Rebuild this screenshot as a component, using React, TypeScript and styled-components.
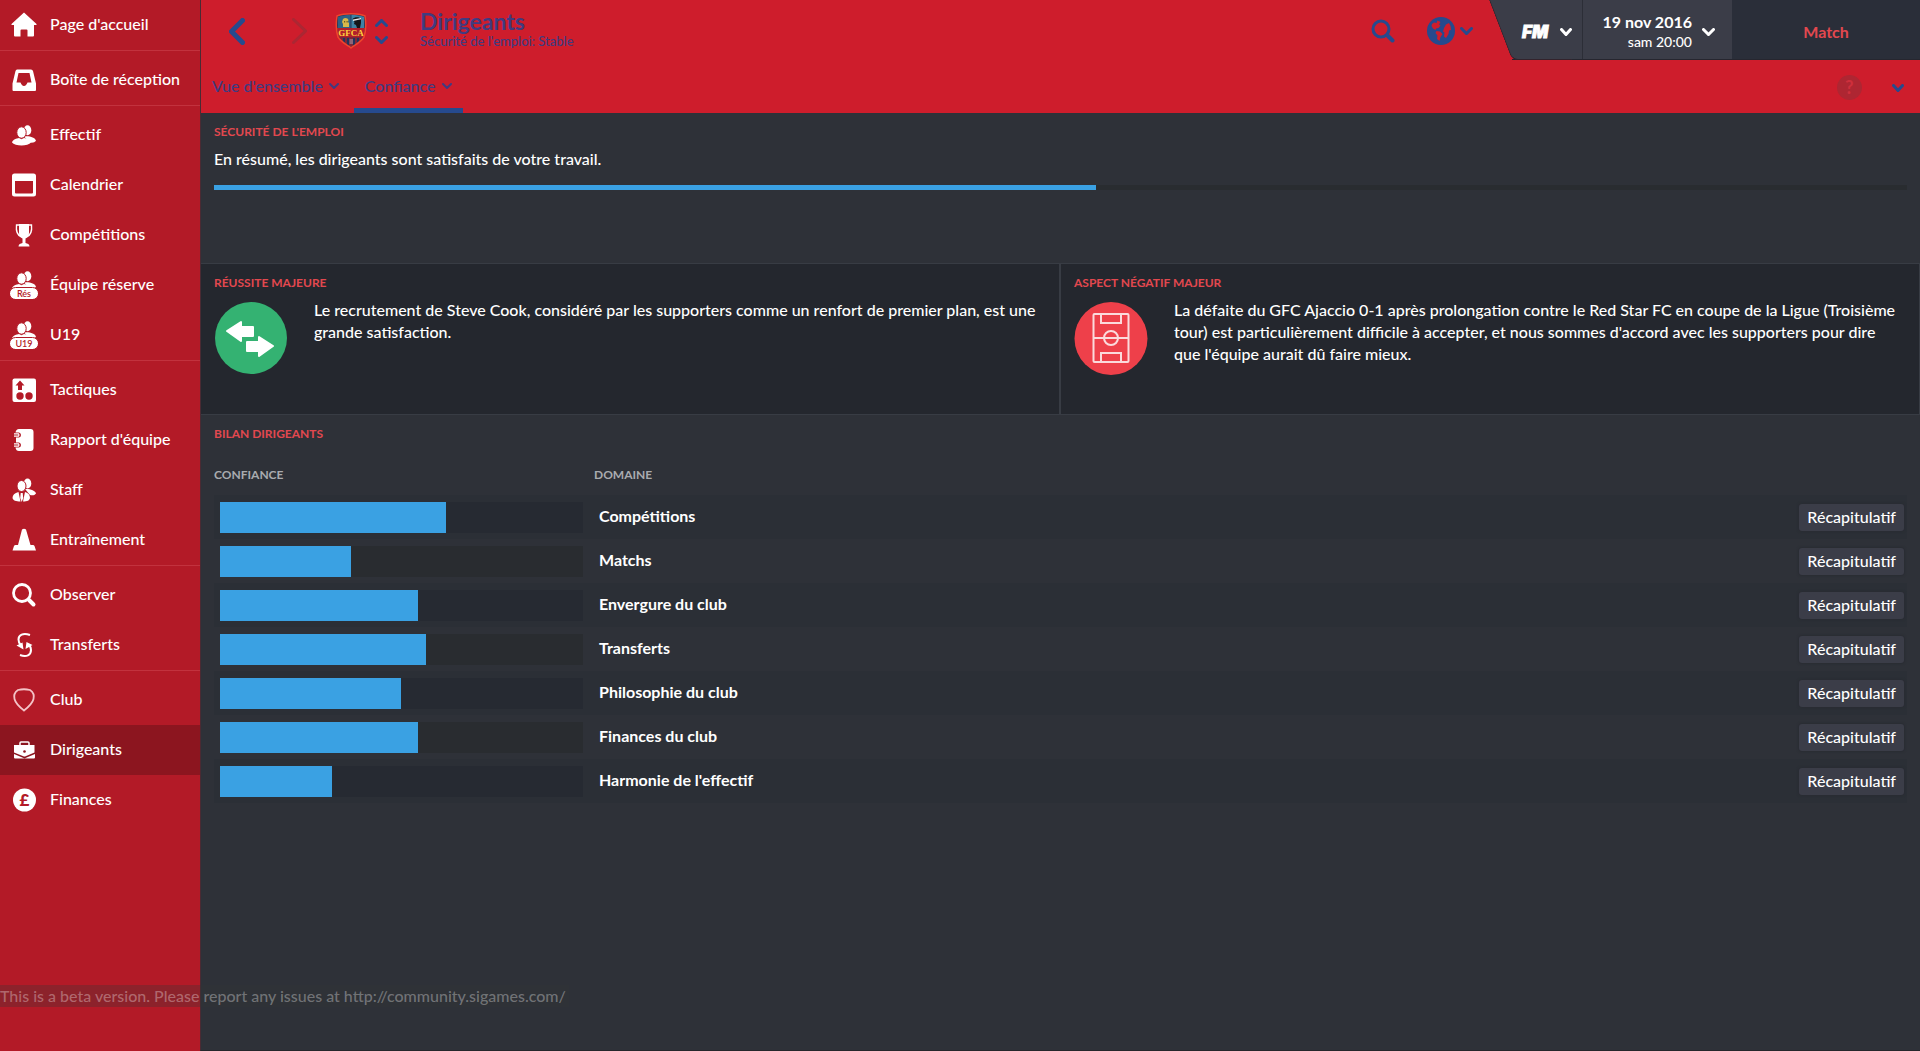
import React from 'react';
import styled, { createGlobalStyle, css } from 'styled-components';

const color = {
  header: '#ce1d2c',
  sidebar: '#b31a27',
  sidebarActive: '#8c151f',
  sidebarLine: '#c2323e',
  body: '#2e3138',
  panel: '#24272e',
  line: '#383c44',
  accent: '#e2484f',
  club: '#264a8e',
  clubText: '#403b80',
  bar: '#3aa1e3',
  control: '#3b3d48',
};

const GlobalStyle = createGlobalStyle`
  *, *::before, *::after { box-sizing: border-box; }
  body {
    margin: 0;
    background: ${color.body};
    color: #fff;
    font: 500 16px/22px Lato, "Open Sans", sans-serif;
  }
  button { font: inherit; color: inherit; background: none; border: 0; padding: 0; cursor: pointer; }
  a { color: inherit; text-decoration: none; }
  ul { list-style: none; margin: 0; padding: 0; }
  h1, h2, p { margin: 0; }
  svg { display: block; flex: none; }
`;

const Page = styled.div`
  position: relative;
  display: grid;
  grid-template-columns: 200px minmax(0, 1fr);
  min-height: 100vh;
`;

/* ---------- Sidebar ---------- */

const Sidebar = styled.nav`
  background: ${color.sidebar};
`;

const NavGroup = styled.ul`
  & + & {
    border-top: 1px solid ${color.sidebarLine};
    padding-top: 4px;
  }
`;

const NavLink = styled.a<{ $active?: boolean }>`
  display: flex;
  align-items: center;
  gap: 12px;
  height: 50px;
  padding-left: 10px;
  white-space: nowrap;
  background: ${(p) => (p.$active ? color.sidebarActive : 'transparent')};
`;

const NavLabel = styled.span`
  padding-bottom: 2px;
`;

/* ---------- Header ---------- */

const Main = styled.div`
  display: flex;
  flex-direction: column;
  border-left: 1px solid #4a2a33;
  border-bottom: 1px solid #25272b;
`;

const Header = styled.header`
  background: ${color.header};
  color: ${color.club};
`;

const TopRow = styled.div`
  display: flex;
  height: 60px;
`;

const TopTools = styled.div`
  display: flex;
  flex: 1;
  align-items: center;
  padding: 2px 7px 0 4px;
`;

const HistoryButton = styled.button`
  display: flex;
  justify-content: center;
  width: 63px;
`;

const ClubSwitcher = styled.div`
  display: flex;
  align-items: center;
  gap: 8px;
  margin: 0 32px 0 4px;
`;

const SwitchButtons = styled.div`
  display: flex;
  flex-direction: column;
  gap: 9px;
`;

const TitleBlock = styled.div`
  flex: 1;
  padding-bottom: 4px;
  color: ${color.clubText};
`;

const Title = styled.h1`
  font-size: 23px;
  font-weight: 700;
  line-height: 24px;
`;

const Subtitle = styled.p`
  font-size: 13px;
  line-height: 16px;
`;

const ToolButton = styled.button`
  display: flex;
  align-items: center;
  gap: 5px;
  margin-right: 32px;
`;

const Clock = styled.div`
  position: relative;
  display: flex;
  color: #fff;
  border-bottom: 1px solid #26262f;

  &::before {
    content: '';
    position: absolute;
    z-index: 0;
    inset: 0 auto -1px 0;
    width: 60px;
    background: ${color.control};
    border: solid #33232c;
    border-width: 0 0 1px 1px;
    border-radius: 0 0 0 6px;
    transform: skewX(21deg);
    transform-origin: bottom;
  }
`;

const ClockCell = styled.button<{ $kind: 'menu' | 'date' | 'match' }>`
  position: relative;
  display: flex;
  align-items: center;
  justify-content: center;
  padding-top: 4px;

  ${(p) =>
    p.$kind === 'menu' &&
    css`
      width: 70px;
      gap: 6px;
      padding-right: 10px;
      justify-content: flex-end;
      background: linear-gradient(90deg, transparent 20px, ${color.control} 20px);
    `}
  ${(p) =>
    p.$kind === 'date' &&
    css`
      width: 150px;
      gap: 10px;
      padding-right: 17px;
      justify-content: flex-end;
      background: ${color.control};
      border-left: 1px solid #2c2e37;
    `}
  ${(p) =>
    p.$kind === 'match' &&
    css`
      width: 188px;
      background: #2a2e39;
      color: ${color.accent};
      font-weight: 700;
    `}
`;

const DateText = styled.span`
  display: flex;
  flex-direction: column;
  text-align: right;
  font-size: 14px;
  line-height: 20px;

  strong { font-size: 16px; font-weight: 700; }
`;

const TabRow = styled.div`
  display: flex;
  align-items: stretch;
  gap: 4px;
  height: 53px;
  padding-right: 16px;
  color: ${color.clubText};
`;

const Tab = styled.button<{ $active?: boolean }>`
  display: flex;
  align-items: center;
  gap: 6px;
  padding: 4px 11px 0;
  white-space: nowrap;
  border-bottom: 5px solid ${(p) => (p.$active ? color.club : 'transparent')};
`;

const TabTools = styled.div`
  display: flex;
  align-items: center;
  gap: 30px;
  margin-left: auto;
  padding-top: 2px;
`;

const HelpButton = styled.button`
  width: 25px;
  height: 25px;
  border-radius: 50%;
  background: #ae2632;
  color: #ce2f3c;
  font-size: 18px;
  font-weight: 700;
  line-height: 25px;
`;

/* ---------- Content ---------- */

const Section = styled.section<{ $minHeight?: number }>`
  min-height: ${(p) => p.$minHeight ?? 0}px;
  padding: 10px 13px;
`;

const Label = styled.h2`
  color: ${color.accent};
  font-size: 12px;
  font-weight: 700;
  line-height: 18px;
  text-transform: uppercase;
`;

const Summary = styled.p`
  margin: 7px 0 15px;
`;

const Meter = styled.div<{ $size: 'thin' | 'thick' }>`
  height: ${(p) => (p.$size === 'thin' ? 5 : 31)}px;
  background: #292c30;
`;

const MeterFill = styled.div`
  height: 100%;
  background: ${color.bar};
`;

const Highlights = styled.div`
  display: grid;
  grid-template-columns: repeat(2, minmax(0, 1fr));
  gap: 2px;
  background: ${color.line};
  border: solid ${color.line};
  border-width: 1px 1px 1px 0;
`;

const Highlight = styled(Section)`
  padding-right: 18px;
  background: ${color.panel};
`;

const HighlightBody = styled.div`
  display: flex;
  align-items: flex-start;
  gap: 26px;
  margin-top: 7px;
`;

const Table = styled.table`
  width: 100%;
  margin-top: 12px;
  border-collapse: collapse;
  table-layout: fixed;
`;

const HeadCell = styled.th`
  height: 40px;
  padding: 0;
  color: #a9abaf;
  font-size: 12px;
  font-weight: 700;
  text-align: left;
  text-transform: uppercase;

  &:first-child { width: 380px; }
  &:last-child { width: 130px; }
`;

const BodyRow = styled.tr`
  &:nth-child(odd) {
    background: #2b2f36;
    ${Meter} { background: #262a32; }
  }
`;

const BarCell = styled.td`
  height: 44px;
  padding: 0 11px 0 6px;
`;

const NameCell = styled.th`
  padding: 0 5px 2px;
  font-weight: 700;
  text-align: left;
`;

const ActionCell = styled.td`
  padding: 0 3px 0 0;
  text-align: right;
`;

const RecapButton = styled.button`
  height: 27px;
  padding: 0 8px;
  border-radius: 3px;
  background: ${color.control};
  box-shadow: 0 0 2px 1px #292c33;
  vertical-align: middle;
`;

const BetaNotice = styled.p`
  position: absolute;
  left: 0;
  bottom: 44px;
  padding-right: 3px;
  background: rgba(50, 52, 54, 0.3);
  color: rgba(255, 255, 255, 0.32);
  pointer-events: none;
`;

/* ---------- Icons ---------- */

const NavIcon = ({ children }: { children: React.ReactNode }) => (
  <svg width="28" height="28" viewBox="0 0 28 28" fill="#fff" aria-hidden="true">
    {children}
  </svg>
);

const People = ({ dy = 0 }: { dy?: number }) => (
  <g transform={`translate(0 ${dy})`}>
    <ellipse cx="17.5" cy="7.2" rx="3.8" ry="5" />
    <path d="M14 13.5c5-.8 11 .7 12 4.3-1.300 2-4.500 2.300-6.500 1.500z" />
    <ellipse cx="11.500" cy="9.500" rx="4.700" ry="5.700" stroke={color.sidebar} />
    <path d="M2 19.500c1-3.500 4.500-4 7-4.500l2.500 1.300L14 15c3 .6 6.500 1.500 7 4.500-3 4-16 4-19 0z" />
  </g>
);

const Team = ({ tag }: { tag: string }) => (
  <NavIcon>
    <People dy={-2} />
    <rect x="-.5" y="16.500" width="29" height="12" rx="6" stroke={color.sidebar} />
    <text x="14" y="26" textAnchor="middle" fontSize="9" fontWeight="600" fill={color.sidebar}>
      {tag}
    </text>
  </NavIcon>
);

const Chevron = ({
  dir = 'down',
  w = 12,
  h = 8,
  stroke = 3,
  tone = 'currentColor',
}: {
  dir?: 'down' | 'up' | 'left' | 'right';
  w?: number;
  h?: number;
  stroke?: number;
  tone?: string;
}) => {
  const m = stroke / 2;
  const d = {
    down: `M${m} ${m}L${w / 2} ${h - m}L${w - m} ${m}`,
    up: `M${m} ${h - m}L${w / 2} ${m}L${w - m} ${h - m}`,
    left: `M${w - m} ${m}L${m} ${h / 2}L${w - m} ${h - m}`,
    right: `M${m} ${m}L${w - m} ${h / 2}L${m} ${h - m}`,
  }[dir];
  return (
    <svg width={w} height={h} fill="none" stroke={tone} strokeWidth={stroke} strokeLinecap="round" aria-hidden="true">
      <path d={d} />
    </svg>
  );
};

const Crest = () => (
  <svg width="32" height="36" viewBox="0 0 32 36" aria-label="GFCA" role="img">
    <path d="M2 3C9 0 23 0 30 3c1 7 1 15-1 21-3 5-9 8-13 11C12 32 6 29 3 24 1 18 1 10 2 3z" fill="#243a5e" />
    <path d="M3 4c4-1.500 8-2 12.500-2v13H3z" fill="#2d6285" />
    <path d="M16.500 2C21 2 25 2.500 29 4v11H16.500z" fill="#3d82a4" />
    <path d="M8 6c2-2 5-1 5.500 1L13 9l1 1v4H8v-3L7 9z" fill="#d8b84a" />
    <path d="M9 8h1.200v1.500H9zM11.500 8h1.200v1.500h-1.200z" fill="#6b5a22" />
    <path d="M17.500 6c2-2.500 7-2.500 8.500 0v4l-1 5h-3l-1-3-2-1 .5-2z" fill="#141519" />
    <path d="M18 6.500l8-1.500v1.300L18 8z" fill="#e9ecef" />
    <path d="M3 24h26c-3 5-9 8-13 11C12 32 6 29 3 24z" fill="#7d2638" />
    <path d="M9 25v5M13 25v8M19 25v8M23 25v5" stroke="#22345c" strokeWidth="2" />
    <path d="M14.500 26h3.500v5h-3.500z" fill="#9fa4b5" opacity=".5" />
    <path d="M2 15h28l-.8 9H2.800z" fill="#b01f2b" />
    <text x="16" y="22.500" textAnchor="middle" fontFamily="Liberation Serif, serif" fontSize="9" fontWeight="700" fill="#ffd23c">
      GFCA
    </text>
    <path d="M2 3C9 0 23 0 30 3c1 7 1 15-1 21-3 5-9 8-13 11C12 32 6 29 3 24 1 18 1 10 2 3z" fill="none" stroke="#f0442c" strokeWidth="1.500" />
  </svg>
);

const Globe = () => (
  <svg width="28" height="28" viewBox="0 0 28 28" aria-hidden="true">
    <circle cx="14" cy="14" r="14" fill={color.club} />
    <g fill={color.header}>
      <path d="M5 7l2-1.500 2.500.5 1-2.500 3 1.500L12 7.500l1.500 1-2 2.500-2.500.5L8.500 13 6 11.500 4.500 9z" />
      <path d="M9.500 14l3.500.5 2.500 2.500-2 3-1 4-2.500-2 .5-3.500L8.500 16z" />
      <path d="M17 11l2-3.500 3-1.500 1.500 3 .5 4-2 .5-.5 3.500-2.500 4-2-1.500.5-4-1.500-1z" />
    </g>
  </svg>
);

const Search = () => (
  <svg width="24" height="24" viewBox="0 0 24 24" fill="none" stroke="currentColor" strokeLinecap="round" aria-hidden="true">
    <circle cx="10" cy="10" r="8" strokeWidth="3" />
    <path d="M16.500 16.500l5 5" strokeWidth="4" />
  </svg>
);

const FmLogo = () => (
  <svg width="34" height="18" viewBox="0 0 34 18" role="img" aria-label="FM">
    <text x="2" y="15" fontFamily="Inter, sans-serif" fontSize="17" fontWeight="900" fontStyle="italic" fill="#fff" stroke="#fff" strokeWidth=".8">
      FM
    </text>
  </svg>
);

const SigningBadge = () => (
  <svg width="74" height="76" viewBox="0 0 74 76" aria-hidden="true">
    <circle cx="37" cy="39" r="36" fill="#34b272" />
    <g fill="#fff" stroke="#fff" strokeWidth="2" strokeLinejoin="round">
      <path d="M13 32l14-9v5h12v9H27v5z" />
      <path d="M59 47l-14-9v5H33v9h12v5z" />
    </g>
  </svg>
);

const PitchBadge = () => (
  <svg width="74" height="76" viewBox="0 0 74 76" fill="none" stroke="#fbdadc" strokeWidth="2" aria-hidden="true">
    <circle cx="37" cy="39.500" r="36.500" fill="#ee404a" stroke="none" />
    <rect x="19.500" y="15" width="35" height="48" rx="1" />
    <path d="M27 15v9h20v-9M27 63v-9h20v9M19.500 39h35" />
    <circle cx="37" cy="39" r="7" />
  </svg>
);

const icons = {
  home: (
    <NavIcon>
      <path d="M14 1.500L26.500 13v1H24v10.500q0 1-1 1h-5.500v-6q0-1-1-1h-5q-1 0-1 1v6H5q-1 0-1-1V14H1.500v-1z" />
    </NavIcon>
  ),
  inbox: (
    <NavIcon>
      <path fillRule="evenodd" d="M7 3.500h14q1.500 0 2 1.500l3 12.500V24q0 1-1 1H3.500q-1 0-1-1v-6.500L5.500 5Q6 3.500 7 3.500zM8.500 7L6.500 16.500h4c1 2 1.800 3.500 3.500 3.500s2.500-1.500 3.500-3.500h4L19.500 7z" />
    </NavIcon>
  ),
  squad: (
    <NavIcon>
      <People dy={2} />
    </NavIcon>
  ),
  calendar: (
    <NavIcon>
      <path fillRule="evenodd" d="M4.500 2.500h19q2.500 0 2.500 2.500v18q0 2.500-2.500 2.500h-19Q2 25.500 2 23V5q0-2.500 2.500-2.500zM5 10v11.500q0 1 1 1h16q1 0 1-1V10z" />
    </NavIcon>
  ),
  cup: (
    <NavIcon>
      <path d="M9 3h10v9c0 3-1.500 5-3.500 5.500v4.500c2 .5 4 1 4 3.500h-11c0-2.500 2-3 4-3.500v-4.500C10.500 17 9 15 9 12z" />
      <path d="M9 4H6.500c-.5 5 .5 10 4.500 11.500M19 4h2.500c.5 5-.5 10-4.500 11.500" fill="none" stroke="#fff" strokeWidth="1.400" />
    </NavIcon>
  ),
  reserve: <Team tag="Rés" />,
  u19: <Team tag="U19" />,
  tactics: (
    <NavIcon>
      <rect x="2.500" y="2.500" width="23.500" height="23.500" rx="2" />
      <g fill={color.sidebar}>
        <path d="M10 4.500l4.500 5H12v4.500H8V9.500H5.500z" />
        <circle cx="10" cy="20" r="3.700" />
        <circle cx="19" cy="20" r="3.700" />
      </g>
    </NavIcon>
  ),
  report: (
    <NavIcon>
      <path d="M9 3h11.500q3 0 3 3v16q0 3-3 3H9q-3 0-3.500-3.500H9q2-.5 2-2.500t-2-2.500H6v-5h3q2-.5 2-2.500T9 6.500H5.500Q6 3 9 3z" />
      <path d="M4 7.800h4.500q1 1.200 0 2.400H4M4 17.800h4.500q1 1.200 0 2.400H4" fill="none" stroke="#fff" strokeWidth="1.200" />
    </NavIcon>
  ),
  staff: (
    <NavIcon>
      <ellipse cx="17.500" cy="7.500" rx="3.800" ry="5" />
      <path d="M15 13c4.500-.5 10.500 1.500 11 4.500-1.500 2-3.500 2-6 1.500z" />
      <ellipse cx="11.500" cy="10" rx="4.500" ry="5.500" stroke={color.sidebar} />
      <path d="M8.500 16l2 9.500C6 25.500 3 24.500 2.500 22c0-3 2-5 6-6zM15 16l-2 9.500c4.500 0 6.500-1 7-3.500 0-3-1.500-5-5-6zM10.700 17h2l.5 5-1.500 4-1.500-4z" />
    </NavIcon>
  ),
  training: (
    <NavIcon>
      <path d="M12 3.500q2-1.500 4 0L20.500 19H23q1 0 1.500 1l1.500 4.500H2.500L4 20q.5-1 1.500-1H8z" />
    </NavIcon>
  ),
  scout: (
    <NavIcon>
      <g fill="none" stroke="#fff" strokeLinecap="round">
        <circle cx="12" cy="12" r="8.500" strokeWidth="2.800" />
        <path d="M19 19l4.500 4.500" strokeWidth="4" />
      </g>
    </NavIcon>
  ),
  transfers: (
    <NavIcon>
      <g fill="none" stroke="#fff" strokeWidth="2">
        <path d="M20 4C13 1.500 8.500 4 8.500 8.500c0 2 .5 4 2.500 6" />
        <path d="M10 24c6.500 2.500 11 0 11-5 0-2-.5-3.500-2-5" />
      </g>
      <path d="M6.500 14.500l6-3 1 7zM22.500 14l-6-3-1 7z" />
    </NavIcon>
  ),
  club: (
    <NavIcon>
      <path d="M8 4q6-1.500 12 0c3 2 4.500 5 3.500 9-1 4-5 8-9.500 11.500C9.500 21 5.500 17 4.500 13 3.500 9 5 6 8 4z" fill="none" stroke="#f4c3c7" strokeWidth="1.800" />
    </NavIcon>
  ),
  board: (
    <NavIcon>
      <path d="M10 10V7q0-1 1-1h7q1 0 1 1v3" fill="none" stroke="#fff" strokeWidth="1.500" />
      <path d="M4.500 9h20v7.500L15 20.500q-.5.200-1 0L4 16.500V9z" />
      <circle cx="14.500" cy="15.500" r="1.300" fill={color.sidebarActive} />
      <path d="M4 18l9.500 4q1 .4 2 0l9.500-4V21.500q0 1-1 1H5q-1 0-1-1z" />
    </NavIcon>
  ),
  finances: (
    <NavIcon>
      <circle cx="14.500" cy="14" r="11.500" />
      <text x="14.500" y="20" textAnchor="middle" fontSize="17" fontWeight="900" fill={color.sidebar}>
        £
      </text>
    </NavIcon>
  ),
};

/* ---------- Data ---------- */

const navGroups: { label: string; icon: keyof typeof icons; active?: boolean }[][] = [
  [{ label: "Page d'accueil", icon: 'home' }],
  [{ label: 'Boîte de réception', icon: 'inbox' }],
  [
    { label: 'Effectif', icon: 'squad' },
    { label: 'Calendrier', icon: 'calendar' },
    { label: 'Compétitions', icon: 'cup' },
    { label: 'Équipe réserve', icon: 'reserve' },
    { label: 'U19', icon: 'u19' },
  ],
  [
    { label: 'Tactiques', icon: 'tactics' },
    { label: "Rapport d'équipe", icon: 'report' },
    { label: 'Staff', icon: 'staff' },
    { label: 'Entraînement', icon: 'training' },
  ],
  [
    { label: 'Observer', icon: 'scout' },
    { label: 'Transferts', icon: 'transfers' },
  ],
  [
    { label: 'Club', icon: 'club' },
    { label: 'Dirigeants', icon: 'board', active: true },
    { label: 'Finances', icon: 'finances' },
  ],
];

const areas = [
  { name: 'Compétitions', value: 62.3 },
  { name: 'Matchs', value: 36.1 },
  { name: 'Envergure du club', value: 54.5 },
  { name: 'Transferts', value: 56.7 },
  { name: 'Philosophie du club', value: 49.9 },
  { name: 'Finances du club', value: 54.5 },
  { name: "Harmonie de l'effectif", value: 30.9 },
];

const Bar = ({ value, size, label }: { value: number; size: 'thin' | 'thick'; label: string }) => (
  <Meter $size={size} role="meter" aria-label={label} aria-valuemin={0} aria-valuemax={100} aria-valuenow={value}>
    <MeterFill style={{ width: `${value}%` }} />
  </Meter>
);

export default function App() {
  return (
    <Page>
      <GlobalStyle />
      <Sidebar>
        {navGroups.map((group) => (
          <NavGroup key={group[0].label}>
            {group.map((item) => (
              <li key={item.label}>
                <NavLink href="#" $active={item.active} aria-current={item.active ? 'page' : undefined}>
                  {icons[item.icon]}
                  <NavLabel>{item.label}</NavLabel>
                </NavLink>
              </li>
            ))}
          </NavGroup>
        ))}
      </Sidebar>

      <Main>
        <Header>
          <TopRow>
            <TopTools>
              <HistoryButton aria-label="Précédent">
                <Chevron dir="left" w={16} h={27} stroke={5} />
              </HistoryButton>
              <HistoryButton aria-label="Suivant" disabled>
                <Chevron dir="right" w={15} h={26} stroke={3} tone="#ab2733" />
              </HistoryButton>
              <ClubSwitcher>
                <Crest />
                <SwitchButtons>
                  <button aria-label="Club précédent">
                    <Chevron dir="up" w={13} />
                  </button>
                  <button aria-label="Club suivant">
                    <Chevron w={13} />
                  </button>
                </SwitchButtons>
              </ClubSwitcher>
              <TitleBlock>
                <Title>Dirigeants</Title>
                <Subtitle>Sécurité de l'emploi: Stable</Subtitle>
              </TitleBlock>
              <ToolButton aria-label="Rechercher">
                <Search />
              </ToolButton>
              <ToolButton aria-label="Monde">
                <Globe />
                <Chevron w={13} />
              </ToolButton>
            </TopTools>
            <Clock>
              <ClockCell $kind="menu">
                <FmLogo />
                <Chevron />
              </ClockCell>
              <ClockCell $kind="date">
                <DateText>
                  <strong>19 nov 2016</strong>
                  <span>sam 20:00</span>
                </DateText>
                <Chevron w={13} />
              </ClockCell>
              <ClockCell $kind="match">Match</ClockCell>
            </Clock>
          </TopRow>
          <TabRow>
            <Tab>
              Vue d'ensemble
              <Chevron w={10} h={6} stroke={2} />
            </Tab>
            <Tab $active>
              Confiance
              <Chevron w={10} h={6} stroke={2} />
            </Tab>
            <TabTools>
              <HelpButton aria-label="Aide">?</HelpButton>
              <button aria-label="Plus d'options">
                <Chevron tone={color.club} />
              </button>
            </TabTools>
          </TabRow>
        </Header>

        <Section $minHeight={150}>
          <Label>Sécurité de l'emploi</Label>
          <Summary>En résumé, les dirigeants sont satisfaits de votre travail.</Summary>
          <Bar value={52.1} size="thin" label="Sécurité de l'emploi" />
        </Section>

        <Highlights>
          <Highlight $minHeight={150}>
            <Label>Réussite majeure</Label>
            <HighlightBody>
              <SigningBadge />
              <p>
                Le recrutement de Steve Cook, considéré par les supporters comme un renfort de premier plan, est une
                grande satisfaction.
              </p>
            </HighlightBody>
          </Highlight>
          <Highlight $minHeight={150}>
            <Label>Aspect négatif majeur</Label>
            <HighlightBody>
              <PitchBadge />
              <p>
                La défaite du GFC Ajaccio 0-1 après prolongation contre le Red Star FC en coupe de la Ligue (Troisième
                tour) est particulièrement difficile à accepter, et nous sommes d'accord avec les supporters pour dire
                que l'équipe aurait dû faire mieux.
              </p>
            </HighlightBody>
          </Highlight>
        </Highlights>

        <Section>
          <Label>Bilan dirigeants</Label>
          <Table>
            <thead>
              <tr>
                <HeadCell scope="col">Confiance</HeadCell>
                <HeadCell scope="col">Domaine</HeadCell>
                <HeadCell as="td" />
              </tr>
            </thead>
            <tbody>
              {areas.map((area) => (
                <BodyRow key={area.name}>
                  <BarCell>
                    <Bar value={area.value} size="thick" label={area.name} />
                  </BarCell>
                  <NameCell scope="row">{area.name}</NameCell>
                  <ActionCell>
                    <RecapButton>Récapitulatif</RecapButton>
                  </ActionCell>
                </BodyRow>
              ))}
            </tbody>
          </Table>
        </Section>
      </Main>

      <BetaNotice>This is a beta version. Please report any issues at http://community.sigames.com/</BetaNotice>
    </Page>
  );
}
